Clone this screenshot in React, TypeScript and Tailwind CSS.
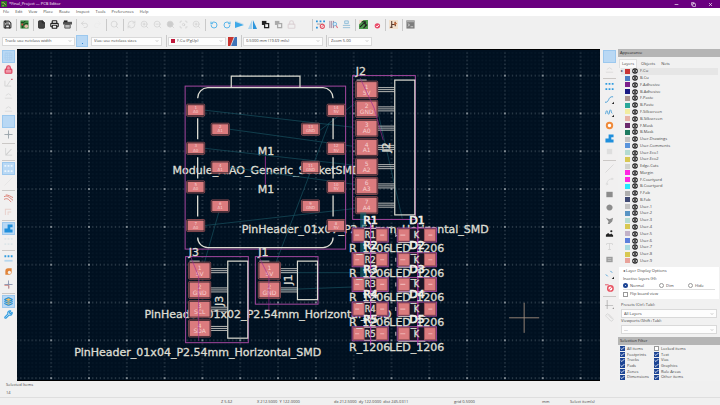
import React from "react";
import {
  Save, Printer, File, Undo2, Redo2, Search, RefreshCw, ZoomIn, ZoomOut, ScanSearch, Lock,
  RotateCcw, RotateCw, Check, ChevronDown, Minus, Copy, X, Grid3x3, Slash,
  Spline, Type, Wrench, Layers, Ruler,
} from "lucide-react";

const UI = "font-['Open_Sans','Noto_Sans',sans-serif] text-[4px] leading-[6px] text-[#444]";

type Tool = { name: string; icon?: React.ReactNode; active?: boolean };
type Slot = Tool | "sep" | "gap";

const ic = "size-[9px]";

/* ---------- hand drawn tool icons ---------- */
const BoardIcon = () => (
  <svg viewBox="0 0 10 10" className={ic}>
    <rect x="0.5" y="0.5" width="9" height="9" fill="#3d8a42" />
    <path d="M1 3h3l2-2M3 9V6l3-2h3" stroke="#12351a" fill="none" />
    <circle cx="7" cy="7" r="2" fill="#e8b7a8" />
    <rect x="1.5" y="4" width="2" height="2" fill="#d94444" />
  </svg>
);
const PlotIcon = () => (
  <svg viewBox="0 0 10 10" className={ic}>
    <path d="M0 2h10v3H0z" fill="#555" />
    <path d="M2 5h6v4H2z" fill="#bbb" stroke="#555" />
    <path d="M1 0.5h4v2H1z" fill="#222" />
  </svg>
);
const MirrorV = () => (
  <svg viewBox="0 0 10 10" className={ic}>
    <path d="M0 0.500l10 4H0z" fill="#c9dcea" />
    <path d="M0 2l10 3.500L0 9z" fill="#3fa9e8" />
  </svg>
);
const MirrorH = () => (
  <svg viewBox="0 0 10 10" className={ic}>
    <path d="M4.5 0v10H0z" fill="#a8d4f0" />
    <path d="M5.5 0v10H10z" fill="#2c95dc" />
  </svg>
);
const Grouped = ({ c }: { c: string }) => (
  <svg viewBox="0 0 10 10" className={ic}>
    <rect x="1" y="1" width="5" height="4.5" fill={c} />
    <rect x="4" y="4" width="4.5" height="4.5" fill="#f0f0f0" stroke={c} strokeWidth="1.4" />
  </svg>
);
const FpCheck = () => (
  <svg viewBox="0 0 10 10" className={ic}>
    <path d="M0 1.5h2M4 1.5h2M8 1.5h2M0 8.5h2" stroke="#2c95dc" strokeWidth="2" />
    <path d="M1 4.5h7" stroke="#9a9a9a" />
    <circle cx="7" cy="7" r="2.3" fill="#fff" stroke="#e04a5c" strokeWidth="1.2" />
    <path d="M5.5 8.5l3-3" stroke="#e04a5c" />
  </svg>
);
const Library = () => (
  <svg viewBox="0 0 10 10" className={ic}>
    <path d="M1 1v8M3 1v8M5 1v8" stroke="#9a7f9c" strokeWidth="1" />
    <circle cx="6.5" cy="4.5" r="2" fill="#d5ecfa" stroke="#5ba7d8" strokeWidth="0.8" />
    <path d="M8 6l1.5 3" stroke="#e04a5c" />
  </svg>
);
const Netlist = () => (
  <svg viewBox="0 0 10 10" className={ic}>
    <path d="M3 1h4v3H3zM1 6h8M1 8.5h8" stroke="#8ebbd6" fill="#dbeaf4" />
  </svg>
);
const Update = () => (
  <svg viewBox="0 0 10 10" className={ic}>
    <rect width="10" height="10" fill="#4c9a4e" />
    <path d="M0 0h5l-5 5z" fill="#f1ddd0" />
    <path d="M1 8l6-6M3 2h4v4M5 9l4-4" stroke="#222" strokeWidth="1.2" fill="none" />
  </svg>
);
const Drc = () => (
  <svg viewBox="0 0 10 10" className={ic}>
    <circle cx="6" cy="6.500" r="3" fill="#e84a68" />
    <path d="M4.500 6.500l1.2 1.2L7.600 5.500" stroke="#fff" fill="none" strokeWidth="1.1" />
  </svg>
);
const Schematic = () => (
  <svg viewBox="0 0 10 10" className={ic}>
    <rect width="10" height="10" fill="#f2e2cf" />
    <path d="M3 1v8M3 5h4M7 2v5M1 8h3" stroke="#5b3a2c" strokeWidth="1.2" />
    <path d="M6 2l3 2-3 2z" fill="#c96b3b" />
  </svg>
);
const ConsoleIcon = () => (
  <svg viewBox="0 0 10 10" className={ic}>
    <rect x="0.5" y="0.5" width="9" height="9" fill="#7d7d7d" />
    <path d="M0.5 1.500h9" stroke="#aaa" strokeWidth="2" />
    <path d="M2 4l2 1.500L2 7M5 7.500h3" stroke="#e8e8e8" fill="none" strokeWidth="0.8" />
  </svg>
);
const Dots = ({ c = "#2f9be0" }: { c?: string }) => (
  <svg viewBox="0 0 10 10" className={ic}>
    <path d="M0.5 2h2M4 2h2M7.5 2h2M0.5 8h2M4 8h2M7.5 8h2" stroke={c} strokeWidth="2" />
  </svg>
);
const PadSketch = () => (
  <svg viewBox="0 0 10 10" className={ic}>
    <path d="M0.5 2.500h2M4 2.500h2M7.5 2.500h2" stroke="#2f9be0" strokeWidth="2.4" />
    <path d="M0.500 7.500h9" stroke="#b7d7ee" strokeWidth="2" />
  </svg>
);
const Zone = () => (
  <svg viewBox="0 0 10 10" className={ic}>
    <path d="M4 0.5h5.5v3H7v2.5h2.5v3.5H0.5V5H4z" fill="#1f8fdc" />
  </svg>
);
const Curves = () => (
  <svg viewBox="0 0 10 10" className={ic}>
    <path d="M0 3c4-2 6 1 10 4M0 6c4-2 5 0 8 3M2 1c3 0 6 2 8 3" stroke="#d9796d" fill="none" />
  </svg>
);
const Faint = () => (
  <svg viewBox="0 0 10 10" className={ic}>
    <path d="M1 8h8M2 5l3-2 3 2" stroke="#dadada" fill="none" />
  </svg>
);
const Polar = () => (
  <svg viewBox="0 0 10 10" className={ic}>
    <path d="M1 3v6h7M3 9l4-6" stroke="#d4d4d4" fill="none" />
    <path d="M8 1.500h1.500" stroke="#d0556a" strokeWidth="1.400" />
  </svg>
);
const Cross = ({ c, d }: { c: string; d?: string }) => (
  <svg viewBox="0 0 10 10" className={ic}>
    <path d="M5 0.500v9M0.500 5h9" stroke={c} />
    {d && <path d="M0.500 6h5v3.500" stroke={d} fill="none" />}
    <circle cx="5" cy="5" r="1" fill={c} />
  </svg>
);
const ViaSketch = () => (
  <svg viewBox="0 0 10 10" className={ic}>
    <path d="M1.500 8.500V4.500a3 3 0 0 1 3-3h4v4a3 3 0 0 1-3 3z" fill="#e0843a" />
    <circle cx="6" cy="6" r="1.800" fill="#f4f0ec" />
  </svg>
);
const Via = () => (
  <svg viewBox="0 0 10 10" className={ic}>
    <circle cx="5" cy="5" r="3" fill="#fff" stroke="#ef8a3a" strokeWidth="2.2" />
  </svg>
);
const Delete = () => (
  <svg viewBox="0 0 10 10" className={ic}>
    <path d="M0 2h4" stroke="#e04a5c" />
    <circle cx="6" cy="6" r="3" fill="#fff" stroke="#e8505f" strokeWidth="1.6" />
    <path d="M4 8l4-4" stroke="#e8505f" />
  </svg>
);
const Wave = ({ d }: { d: string }) => (
  <svg viewBox="0 0 10 10" className={ic}>
    <path d={d} stroke="#4c9fd6" fill="none" strokeWidth="1.1" />
    <path d="M10 7.5V10H7.5z" fill="#222" />
  </svg>
);
const Shape = ({ d, c = "#8c8c8c" }: { d: string; c?: string }) => (
  <svg viewBox="0 0 10 10" className={ic}><path d={d} fill={c} /></svg>
);
const Picture = () => (
  <svg viewBox="0 0 10 10" className={ic}>
    <path d="M1 8.500V6.500l2.500-2 2 1.500L7 5l2 2v1.500z" fill="#222" />
    <circle cx="7" cy="2.500" r="1.200" fill="#222" />
  </svg>
);
const TextBox = () => (
  <svg viewBox="0 0 10 10" className={ic}>
    <rect x="1.500" y="2" width="7" height="6" fill="#9c9c9c" />
    <path d="M3 4h4M3 6h4" stroke="#c4c4c4" />
  </svg>
);

const grey = "size-[9px] text-[#d2d2d2]";

const topTools: Slot[] = [
  { name: "Save", icon: <Save className="size-[9px] text-[#333]" strokeWidth={3} /> }, "sep",
  { name: "Board setup", icon: <BoardIcon /> }, "sep",
  { name: "Page settings", icon: <File className="size-[9px] text-[#222]" fill="#444" strokeWidth={2} /> },
  { name: "Print", icon: <Printer className="size-[9px] text-[#222]" strokeWidth={3} /> },
  { name: "Plot", icon: <PlotIcon /> }, "sep",
  { name: "Undo", icon: <Undo2 className={grey} /> },
  { name: "Redo", icon: <Redo2 className="size-[9px] text-[#ebebeb]" /> }, "sep",
  { name: "Find", icon: <Search className={grey} /> }, "sep",
  { name: "Refresh", icon: <RefreshCw className={grey} /> },
  { name: "Zoom in", icon: <ZoomIn className={grey} /> },
  { name: "Zoom out", icon: <ZoomOut className={grey} /> },
  { name: "Zoom to fit", icon: <Search className={grey} fill="#ccc" /> },
  { name: "Zoom to objects", icon: <ScanSearch className={grey} /> },
  { name: "Zoom to selection", icon: <ZoomIn className={grey} /> }, "sep",
  { name: "Rotate counterclockwise", icon: <RotateCcw className="size-2 text-[#5bb6ea]" strokeWidth={3} /> },
  { name: "Rotate clockwise", icon: <RotateCw className="size-2 text-[#5bb6ea]" strokeWidth={3} /> },
  { name: "Mirror vertically", icon: <MirrorV /> },
  { name: "Mirror horizontally", icon: <MirrorH /> },
  { name: "Group", icon: <Grouped c="#222" /> },
  { name: "Ungroup", icon: <Grouped c="#aaa" /> },
  { name: "Lock", icon: <Lock className="size-[9px] text-[#dcd3d6]" strokeWidth={3} /> }, "gap", "sep",
  { name: "Footprint editor", icon: <FpCheck /> },
  { name: "Footprint library", icon: <Library /> },
  { name: "Netlist", icon: <Netlist /> }, "sep",
  { name: "Update from schematic", icon: <Update /> },
  { name: "Design rules check", icon: <Drc /> }, "sep",
  { name: "Schematic editor", icon: <Schematic /> }, "sep",
  { name: "Scripting console", icon: <ConsoleIcon /> },
];

const leftTools: Slot[] = [
  { name: "Grid", active: true, icon: <Grid3x3 className="size-[9px] text-[#a9cdee]" /> },
  { name: "Lock override", icon: <Lock className="size-[9px] text-[#dd3f5b]" fill="#ee9aaa" strokeWidth={3} /> },
  { name: "Polar coordinates", icon: <Polar /> },
  { name: "Inches", icon: <Faint /> },
  { name: "Mils", icon: <Faint /> },
  { name: "Millimeters", active: true },
  { name: "Full crosshair", icon: <Cross c="#9aa4aa" /> }, "sep",
  { name: "Free angle", icon: <Shape d="M1.500 1h.8v7.700H9v.8H1.500zM2 8l6-6 .6.6L3 9z" c="#cfcfcf" /> }, "sep",
  { name: "Ratsnest", active: true, icon: <Dots c="#eaf5fd" /> },
  { name: "Curved ratsnest", icon: <Slash className="size-[9px] text-[#e2e2e2]" /> }, "sep",
  { name: "Net highlight", icon: <Curves /> },
  { name: "Net colors", icon: <Shape d="M1 9V2h7v1H2v6zM4 9V5h4v1H5v3z" c="#e8cfca" /> }, "sep",
  { name: "Zone fills", active: true, icon: <Zone /> },
  { name: "Zone outlines", icon: <Dots c="#dde5e8" /> }, "sep",
  { name: "Sketch pads", icon: <PadSketch /> },
  { name: "Sketch vias", icon: <ViaSketch /> },
  { name: "Sketch tracks", icon: <Cross c="#8a94b0" d="#d98a80" /> }, "sep",
  { name: "Layers manager", active: true, icon: <Layers className="size-[9px] text-[#1f8fdc]" fill="#e9bd6a" strokeWidth={3} /> },
  { name: "Properties", icon: <Wrench className="size-[9px] text-[#2f9be0]" strokeWidth={3} /> },
];

const rightTools: Slot[] = [
  { name: "Select", active: true },
  { name: "Local ratsnest", icon: <Faint /> }, "sep",
  { name: "Place footprint", icon: <Dots /> },
  { name: "Route track", icon: <Wave d="M0 8c5 1 3-7 9-6" /> },
  { name: "Tune length", icon: <Wave d="M0 7c1 0 1-4 2-4s1 4 2 4 1-5 2-5 1 4 2 4" /> },
  { name: "Add via", icon: <Via /> },
  { name: "Add zone", icon: <Zone /> },
  { name: "Rule area", icon: <Shape d="M2 2h6v6H2z" c="#dedede" /> }, "sep",
  { name: "Draw line", icon: <Slash className={grey} /> },
  { name: "Draw arc", icon: <Spline className="size-[9px] text-[#dadada]" /> },
  { name: "Draw rectangle", icon: <Shape d="M1.5 2h7v6h-7z" /> },
  { name: "Draw circle", icon: <Shape d="M5 1.6a3.4 3.4 0 1 0 .01 0z" /> },
  { name: "Draw polygon", icon: <Shape d="M1 2l4 1.500L9 2 8 6 5 9H3l1-3z" /> },
  { name: "Add image", icon: <Picture /> },
  { name: "Add text", icon: <Type className={grey} /> },
  { name: "Add text box", icon: <TextBox /> }, "gap",
  { name: "Add dimension", icon: <Wave d="M1 5l2 2M6 1l2 2" /> },
  { name: "Delete", icon: <Delete /> }, "sep",
  { name: "Grid origin", icon: <Shape d="M2 0h.7v10H2zM0 6h9v.7H0zM10 8v2H8z" c="#999" /> },
  { name: "Measure", icon: <Ruler className={grey} /> },
];

const ToolButton = ({ t }: { t: Tool }) => (
  <button
    type="button"
    aria-label={t.name}
    className={
      "flex size-[13px] shrink-0 items-center justify-center " +
      (t.active ? "border border-[#9cc8ee] bg-[#b9d8f4]" : "")
    }
  >
    {t.icon}
  </button>
);

const VerticalBar = ({ tools, label, className }: { tools: Slot[]; label: string; className: string }) => (
  <div role="toolbar" aria-label={label} className={"flex shrink-0 flex-col items-center bg-[#f1f0f0] pt-px " + className}>
    {tools.map((t, i) =>
      t === "gap" ? (
        <div key={i} className="h-[2px] shrink-0" />
      ) : t === "sep" ? (
        <div key={i} className="flex h-1 w-[13px] shrink-0 items-center"><div className="h-px w-full bg-[#cbc8c6]" /></div>
      ) : (
        <ToolButton key={i} t={t} />
      )
    )}
  </div>
);

const Divider = () => <div className="flex h-3 w-1 shrink-0 justify-center"><div className="h-full w-px bg-[#c9c9c9]" /></div>;

function Drop({ label, value, className, swatch }: { label: string; value: string; className: string; swatch?: boolean }) {
  return (
    <div className={"relative flex h-[9px] shrink-0 items-center border border-[#d9d9d9] bg-[#fdfdfd] " + className}>
      {swatch && <span className="ml-[2px] size-1 shrink-0 bg-[#c01a3c]" />}
      <select aria-label={label} className="h-full w-full appearance-none bg-transparent px-[2px] text-[4px] leading-[6px] text-[#444] outline-none">
        <option>{value}</option>
      </select>
      <ChevronDown className="pointer-events-none absolute right-[2px] size-1 text-[#666]" strokeWidth={2} />
    </div>
  );
}

function Tick({ label, checked }: { label: string; checked?: boolean }) {
  return (
    <label className="flex items-center gap-[2px]">
      <span className="relative flex size-[5px] shrink-0">
        <input
          type="checkbox"
          defaultChecked={checked}
          className="peer size-[5px] appearance-none border border-[#999] bg-white checked:border-[#1c4494] checked:bg-[#1c4494]"
        />
        <Check className="pointer-events-none absolute inset-0 hidden size-[5px] text-white peer-checked:block" strokeWidth={4} />
      </span>
      {label}
    </label>
  );
}

function Choice({ label, checked, className }: { label: string; checked?: boolean; className: string }) {
  return (
    <label className={"flex items-center gap-[2px] " + className}>
      <input
        type="radio"
        name="inactive"
        defaultChecked={checked}
        className="size-[5px] shrink-0 appearance-none rounded-full border border-[#999] bg-white checked:border-2 checked:border-[#1c4494]"
      />
      {label}
    </label>
  );
}

const layers: [string, string][] = [
  ["F.Cu", "#c83434"], ["B.Cu", "#4d7fc4"], ["F.Adhesive", "#7d1f8c"], ["B.Adhesive", "#1a1a84"],
  ["F.Paste", "#b09a92"], ["B.Paste", "#2aa89a"], ["F.Silkscreen", "#f2eda1"], ["B.Silkscreen", "#e8b2a7"],
  ["F.Mask", "#6b2a6e"], ["B.Mask", "#1c7a60"], ["User.Drawings", "#c2c2c2"], ["User.Comments", "#5994dc"],
  ["User.Eco1", "#b4dbd2"], ["User.Eco2", "#d8c852"], ["Edge.Cuts", "#d0d2cd"], ["Margin", "#ff26e2"],
  ["F.Courtyard", "#ff26e2"], ["B.Courtyard", "#26e9ff"], ["F.Fab", "#afafaf"], ["B.Fab", "#3f4a74"],
  ["User.1", "#c2c2c2"], ["User.2", "#5994c4"], ["User.3", "#b4dbd2"], ["User.4", "#d8c852"],
  ["User.5", "#c2b2c8"], ["User.6", "#5b7fdc"], ["User.7", "#a8dbe0"], ["User.8", "#d8c852"], ["User.9", "#e8a29a"],
];

const Eye = () => (
  <svg viewBox="0 0 12 12" className="size-[6px] shrink-0">
    <circle cx="6" cy="6" r="5.6" fill="#222" />
    <path d="M1.5 6c2-3.4 7-3.4 9 0-2 3.4-7 3.4-9 0z" fill="#ddd" />
    <circle cx="6" cy="6" r="2" fill="#222" />
  </svg>
);

/* ---------- board drawing ---------- */
const SILK = "#dcdcd2";
const COURT = "#a3479f";
const PAD = "#db7b7e";

const Pad = ({ x, y, w, h, a, b }: { x: number; y: number; w: number; h: number; a?: string; b?: string }) => (
  <g stroke="none">
    <rect x={x} y={y - h / 2} width={w} height={h} rx="1" fill="#12141f" stroke="#a3585c" strokeWidth="0.8" />
    <rect x={x + 1} y={y - h / 2 + 1} width={w - 2} height={h - 2} fill={PAD} />
    {a && <text x={x + w / 2} y={y - 0.8} textAnchor="middle" fontSize={h > 12 ? 6 : 4} fill="#f6cfcf">{a}</text>}
    {b && <text x={x + w / 2} y={y + (h > 12 ? 5 : 3.2)} textAnchor="middle" fontSize={h > 12 ? 6 : 4} fill="#f6cfcf">{b}</text>}
  </g>
);

const ChipPad = ({ x, y, w }: { x: number; y: number; w: number }) => (
  <rect x={x} y={y - 6} width={w} height="12" fill={PAD} stroke="#a3585c" strokeWidth="0.8" />
);

function Header({ x, y, pins, name, labelY }: { x: number; y: number; pins: string[]; name: string; labelY: number }) {
  const h = pins.length * 19.2 + 9;
  return (
    <g>
      <rect x={x} y={y} width="62.5" height={h} fill="none" stroke={COURT} strokeWidth="1" />
      <rect x={x + 42} y={y + 4.5} width="20" height={h - 9} fill="none" stroke={SILK} strokeWidth="1.2" />
      <path d={`M${x + 4} ${y + 4.5}h10`} stroke={SILK} strokeWidth="1" />
      {pins.map((p, i) => {
        const cy = y + 14 + i * 19.2;
        return (
          <g key={i}>
            <path d={`M${x + 25} ${cy - 2}h17M${x + 25} ${cy}h17M${x + 25} ${cy + 2}h17`} stroke="#c9c9c4" strokeWidth="0.9" />
            <Pad x={x + 3} y={cy} w={22} h={17} a={String(i + 1)} b={p} />
          </g>
        );
      })}
      <text x={x + 3} y={y - 1} fontSize="11">{name}</text>
      <text transform={`translate(${x + 37} ${labelY}) rotate(-90)`} textAnchor="middle" fontSize="11">{name}</text>
    </g>
  );
}

function Board() {
  const rows = [0, 1, 2, 3, 4];
  return (
    <svg
      viewBox="17 49 583 331"
      preserveAspectRatio="xMidYMid slice"
      className="absolute inset-0 size-full font-['DejaVu_Sans',sans-serif]"
      role="img"
      aria-label="Board"
    >
      <defs>
        <pattern id="minor" x="50.1" y="73.6" width="3.77" height="3.77" patternUnits="userSpaceOnUse">
          <circle cx="1.88" cy="1.88" r="0.4" fill="#22384a" />
        </pattern>
        <pattern id="major" x="33.1" y="56.7" width="37.7" height="37.7" patternUnits="userSpaceOnUse">
          <path d="M0 18.85h37.7M18.85 0v37.7" stroke="#6a7680" strokeWidth="0.8" strokeDasharray="1 2.77" strokeDashoffset="0.5" />
          <circle cx="18.85" cy="18.85" r="0.9" fill="#a4acb2" />
        </pattern>
      </defs>
      <rect x="17" y="49" width="583" height="331" fill="#001020" />
      <rect x="17" y="49" width="583" height="331" fill="url(#minor)" />
      <rect x="17" y="49" width="583" height="331" fill="url(#major)" />
      <path d="M17 49.5h583M17.5 49v331M17 379.5h583M599.5 49v331" stroke="#000" />

      <g fill={SILK} stroke={SILK} strokeWidth="0.35">
        <g fontSize="11">
          <text x="258" y="155">M1</text>
          <text x="258" y="193">M1</text>
          <text x="173" y="174">Module_XIAO_Generic_SocketSMD</text>
          <text x="242" y="232">PinHeader_01x07_P2.54mm_Horizontal_SMD</text>
          <text x="145" y="317">PinHeader_01x02_P2.54mm_Horizontal_SMD</text>
          <text x="75" y="355">PinHeader_01x04_P2.54mm_Horizontal_SMD</text>
        </g>
        <path
          d="M205 110l148 17M230 129l123 17M205 148l150 17M230 167l125 17M205 225l150-17M320 130l35-27M329 123L268 283M219 212l-20 70M280 272h80M280 289l80-3M375 100l27 118"
          stroke="#17505e" strokeWidth="0.7" fill="none"
        />
        <rect x="185.5" y="86" width="160" height="162.5" fill="none" stroke={COURT} strokeWidth="1" />
        <path d="M231.5 87.500V76h68.500v11.500" fill="none" strokeWidth="1.2" />
        <path
          d="M198 98a10.500 10.500 0 0 1 10-10.500h115a10.500 10.500 0 0 1 10 10.500M198 237a10 10 0 0 0 10 10h115a10 10 0 0 0 10-10M198 118v21M198 157v21M198 195v21M333 118v21M333 157v21M333 195v21"
          fill="none" strokeWidth="1.3"
        />
        <path d="M265.500 156v28" stroke="#8d2f86" strokeWidth="1" />
        {[110, 148, 186.5, 225].map((y, i) => (
          <g key={y}>
            <Pad x={187} y={y} w={18} h={12} a={String(i * 2 + 1)} b="A0" />
            <Pad x={327} y={y} w={18} h={12} a={String(14 - i * 2)} b="5V" />
          </g>
        ))}
        {[129, 167, 205.5].map((y, i) => (
          <g key={y}>
            <Pad x={211.5} y={y} w={18} h={12} a={String(i * 2 + 2)} b="A1" />
            <Pad x={301.5} y={y} w={18} h={12} a={String(13 - i * 2)} b="GND" />
          </g>
        ))}

        <Header x={352.5} y={75.500} pins={["5V", "GND", "A0", "A1", "A2", "A3", "A4"]} name="J2" labelY={147} />
        <Header x={186} y={256} pins={["5V", "GND", "SCL", "SDA"]} name="J3" labelY={300} />
        <Header x={255.500} y={256} pins={["5V", "GND"]} name="J1" labelY={279} />
        <path d="M360 78l14 30 9 32M191 256l8 20v64M259 256l10 20v34" stroke="#a02a96" strokeWidth="0.8" fill="none" opacity="0.8" />
        <path d="M360 212h6v70h-6z" fill="#1d6f78" opacity="0.6" stroke="none" />

        {rows.map((i) => {
          const y = 234.500 + i * 24.600;
          return (
            <g key={i}>
              <rect x="352" y={y - 7} width="36" height="14" fill="#1a1626" stroke={COURT} strokeWidth="1" />
              <ChipPad x={353} y={y} w={11} />
              <ChipPad x={376} y={y} w={11} />
              <rect x="397" y={y - 7} width="39" height="14" fill="#1a1626" stroke={COURT} strokeWidth="1" />
              <ChipPad x={398} y={y} w={11} />
              <ChipPad x={424} y={y} w={11} />
              <path d={`M364 ${y - 6.500}h12M364 ${y + 6.500}h12M398 ${y + 7.500}h27M395.500 ${y - 2}v4`} stroke="#c7b7bd" strokeWidth="1" />
              <path d={`M370.500 ${y - 12}v24M417.500 ${y - 12}v24`} stroke="#b530aa" strokeWidth="1.2" />
              <path d={`M355 ${y}h4M380 ${y}h4M400 ${y}h5M428 ${y}h4`} stroke="#f0b4b4" strokeWidth="1.2" />
              <text x="370" y={y + 3} fontSize="8" textAnchor="middle">{`R${i + 1}`}</text>
              <text x="416" y={y + 3} fontSize="8" textAnchor="middle">K</text>
            </g>
          );
        })}
        {rows.map((i) => (
          <g key={i} fontSize="11">
            <text x="363" y={223.500 + i * 24.600} fill="#efefe8" stroke="#efefe8" strokeWidth="0.7">{`R${i + 1}`}</text>
            <text x="409" y={223.500 + i * 24.600} fill="#efefe8" stroke="#efefe8" strokeWidth="0.7">{`D${i + 1}`}</text>
            <text x="349" y={251.500 + i * 24.600}>R_1206</text>
            <text x="389" y={251.500 + i * 24.600}>LED_1206</text>
          </g>
        ))}
      </g>
      <path d="M508.500 317h30M523.500 302v30" stroke="#a08c7c" strokeWidth="0.9" />
    </svg>
  );
}

const PanelTitle = ({ children }: { children: React.ReactNode }) => (
  <h2 className="flex h-2 shrink-0 items-center bg-[#b5b5b5] px-[2px] text-[#222]">{children}</h2>
);

const filters: [string, boolean][] = [
  ["All items", true], ["Locked items", false], ["Footprints", true], ["Text", true], ["Tracks", true], ["Vias", true],
  ["Pads", true], ["Graphics", true], ["Zones", true], ["Rule Areas", true], ["Dimensions", true], ["Other items", true],
];

function SidePanel() {
  return (
    <aside className="flex w-[102px] shrink-0 flex-col bg-[#f1f1f1]">
      <PanelTitle>Appearance</PanelTitle>
      <div role="tablist" className="flex h-[11px] shrink-0 items-center gap-[2px] pl-px pt-[2px]">
        <button role="tab" aria-selected="true" className="h-full border-x border-t border-[#e0e0e0] bg-[#fafafa] px-[2px]">Layers</button>
        <button role="tab" aria-selected="false" className="px-[2px]">Objects</button>
        <button role="tab" aria-selected="false" className="px-[2px]">Nets</button>
      </div>
      <ul className="flex min-h-0 flex-1 flex-col pl-[3px] pr-[2px]">
        {layers.map(([name, color], i) => (
          <li key={name} className={"flex min-h-0 flex-1 items-center gap-[2px] " + (i === 0 ? "bg-[#e6e6e6]" : "")}>
            <span className="w-[2px] text-[4px] leading-[4px] text-[#335]">{i === 0 ? "▸" : ""}</span>
            <span className="size-[5px] shrink-0" style={{ backgroundColor: color }} />
            <Eye />
            <span>{name}</span>
          </li>
        ))}
      </ul>
      <div className="mx-px mt-[3px] flex shrink-0 flex-col bg-white px-1 pb-px pt-px">
        <div className="h-2">◂ Layer Display Options</div>
        <div className="h-[6px]">Inactive layers (H):</div>
        <div className="flex h-2 items-center border-b border-[#ddd]">
          <Choice label="Normal" checked className="w-9" />
          <Choice label="Dim" className="w-[29px]" />
          <Choice label="Hide" className="" />
        </div>
        <div className="flex h-2 items-center"><Tick label="Flip board view" /></div>
      </div>
      <div className="flex shrink-0 flex-col px-[3px] pb-[3px] pt-[3px]">
        <span className="h-[7px]">Presets (Ctrl+Tab):</span>
        <Drop label="Presets" value="All Layers" className="w-full" />
        <span className="h-[7px]">Viewports (Shift+Tab):</span>
        <Drop label="Viewports" value="---" className="w-full" />
      </div>
      <PanelTitle>Selection Filter</PanelTitle>
      <div className="grid h-9 shrink-0 grid-cols-[34px_1fr] grid-rows-6 items-center pb-px pl-[2px] pt-px">
        {filters.map(([l, c]) => <Tick key={l} label={l} checked={c} />)}
      </div>
    </aside>
  );
}

export default function App() {
  return (
    <div className={"flex min-h-screen w-full flex-col overflow-hidden whitespace-nowrap bg-[#f0f0f0] " + UI}>
      <header className="flex h-2 shrink-0 items-center bg-[#6a007f] pl-px text-white">
        <svg viewBox="0 0 10 10" className="mr-[2px] size-[6px]">
          <rect width="10" height="10" fill="#2f6b2c" />
          <path d="M1 3h4l3 4M2 8h3" stroke="#b9c95a" strokeWidth="1.4" fill="none" />
        </svg>
        <h1>*Final_Project — PCB Editor</h1>
        <div className="ml-auto flex gap-3 pr-[7px]">
          <button aria-label="Minimize"><Minus className="size-[5px]" strokeWidth={3} /></button>
          <button aria-label="Restore"><Copy className="size-[5px]" strokeWidth={3} /></button>
          <button aria-label="Close"><X className="size-[5px]" strokeWidth={3} /></button>
        </div>
      </header>
      <nav className="flex h-[8px] shrink-0 items-center gap-[6px] bg-white pl-[3px]">
        {["File", "Edit", "View", "Place", "Route", "Inspect", "Tools", "Preferences", "Help"].map((m) => (
          <button key={m} type="button">{m}</button>
        ))}
      </nav>
      <div role="toolbar" aria-label="Main" className="flex h-[17px] shrink-0 items-center pl-px">
        {topTools.map((t, i) =>
          t === "sep" ? <Divider key={i} /> : t === "gap" ? <div key={i} className="w-3 shrink-0" /> : <ToolButton key={i} t={t as Tool} />
        )}
      </div>
      <div role="toolbar" aria-label="Track settings" className="flex h-[16px] shrink-0 items-center pl-[2px]">
        <Drop label="Track width" value="Track: use netclass width" className="w-[73px]" />
        <button aria-label="Use existing track width" className="ml-px flex h-3 w-3 items-end justify-center border border-[#9cc8ee] bg-[#b9d8f4] pb-[2px]">
          <span className="size-px bg-[#2c7fd0]" />
        </button>
        <Drop label="Via size" value="Vias: use netclass sizes" className="ml-[3px] mr-[2px] w-[71px]" />
        <Divider />
        <Drop label="Active layer" value="F.Cu (PgUp)" swatch className="w-[58px]" />
        <button aria-label="Layer pair" className="mx-[2px]">
          <svg viewBox="0 0 10 10" className="size-[9px]">
            <path d="M0 0h7L3 10H0z" fill="#c8342f" />
            <path d="M7 0h3v10H3z" fill="#3f74b8" />
            <path d="M7 0L3 10" stroke="#eee" strokeWidth="0.8" />
          </svg>
        </button>
        <Divider />
        <Drop label="Grid" value="0.5000 mm (19.69 mils)" className="mr-px w-[80px]" />
        <Divider />
        <Drop label="Zoom" value="Zoom 5.00" className="w-[44px]" />
      </div>
      <main className="flex flex-1">
        <VerticalBar tools={leftTools} label="View options" className="w-[17px]" />
        <div className="relative flex-1"><Board /></div>
        <VerticalBar tools={rightTools} label="Drawing tools" className="w-[18px]" />
        <SidePanel />
      </main>
      <section className="flex h-4 shrink-0 flex-col justify-evenly pl-[6px]">
        <span>Selected Items</span>
        <span>14</span>
      </section>
      <footer className="flex h-2 shrink-0 items-center border-t border-[#dedede] pl-[221px]">
        <span className="w-9">Z 5.62</span>
        <span className="w-[77px]">X 212.5000&nbsp; Y 122.0000</span>
        <span className="w-[120px]">dx 212.5000&nbsp; dy 122.0000&nbsp; dist 245.0311</span>
        <span className="w-[88px]">grid 0.5000</span>
        <span className="w-7">mm</span>
        <span>Select item(s)</span>
      </footer>
    </div>
  );
}
